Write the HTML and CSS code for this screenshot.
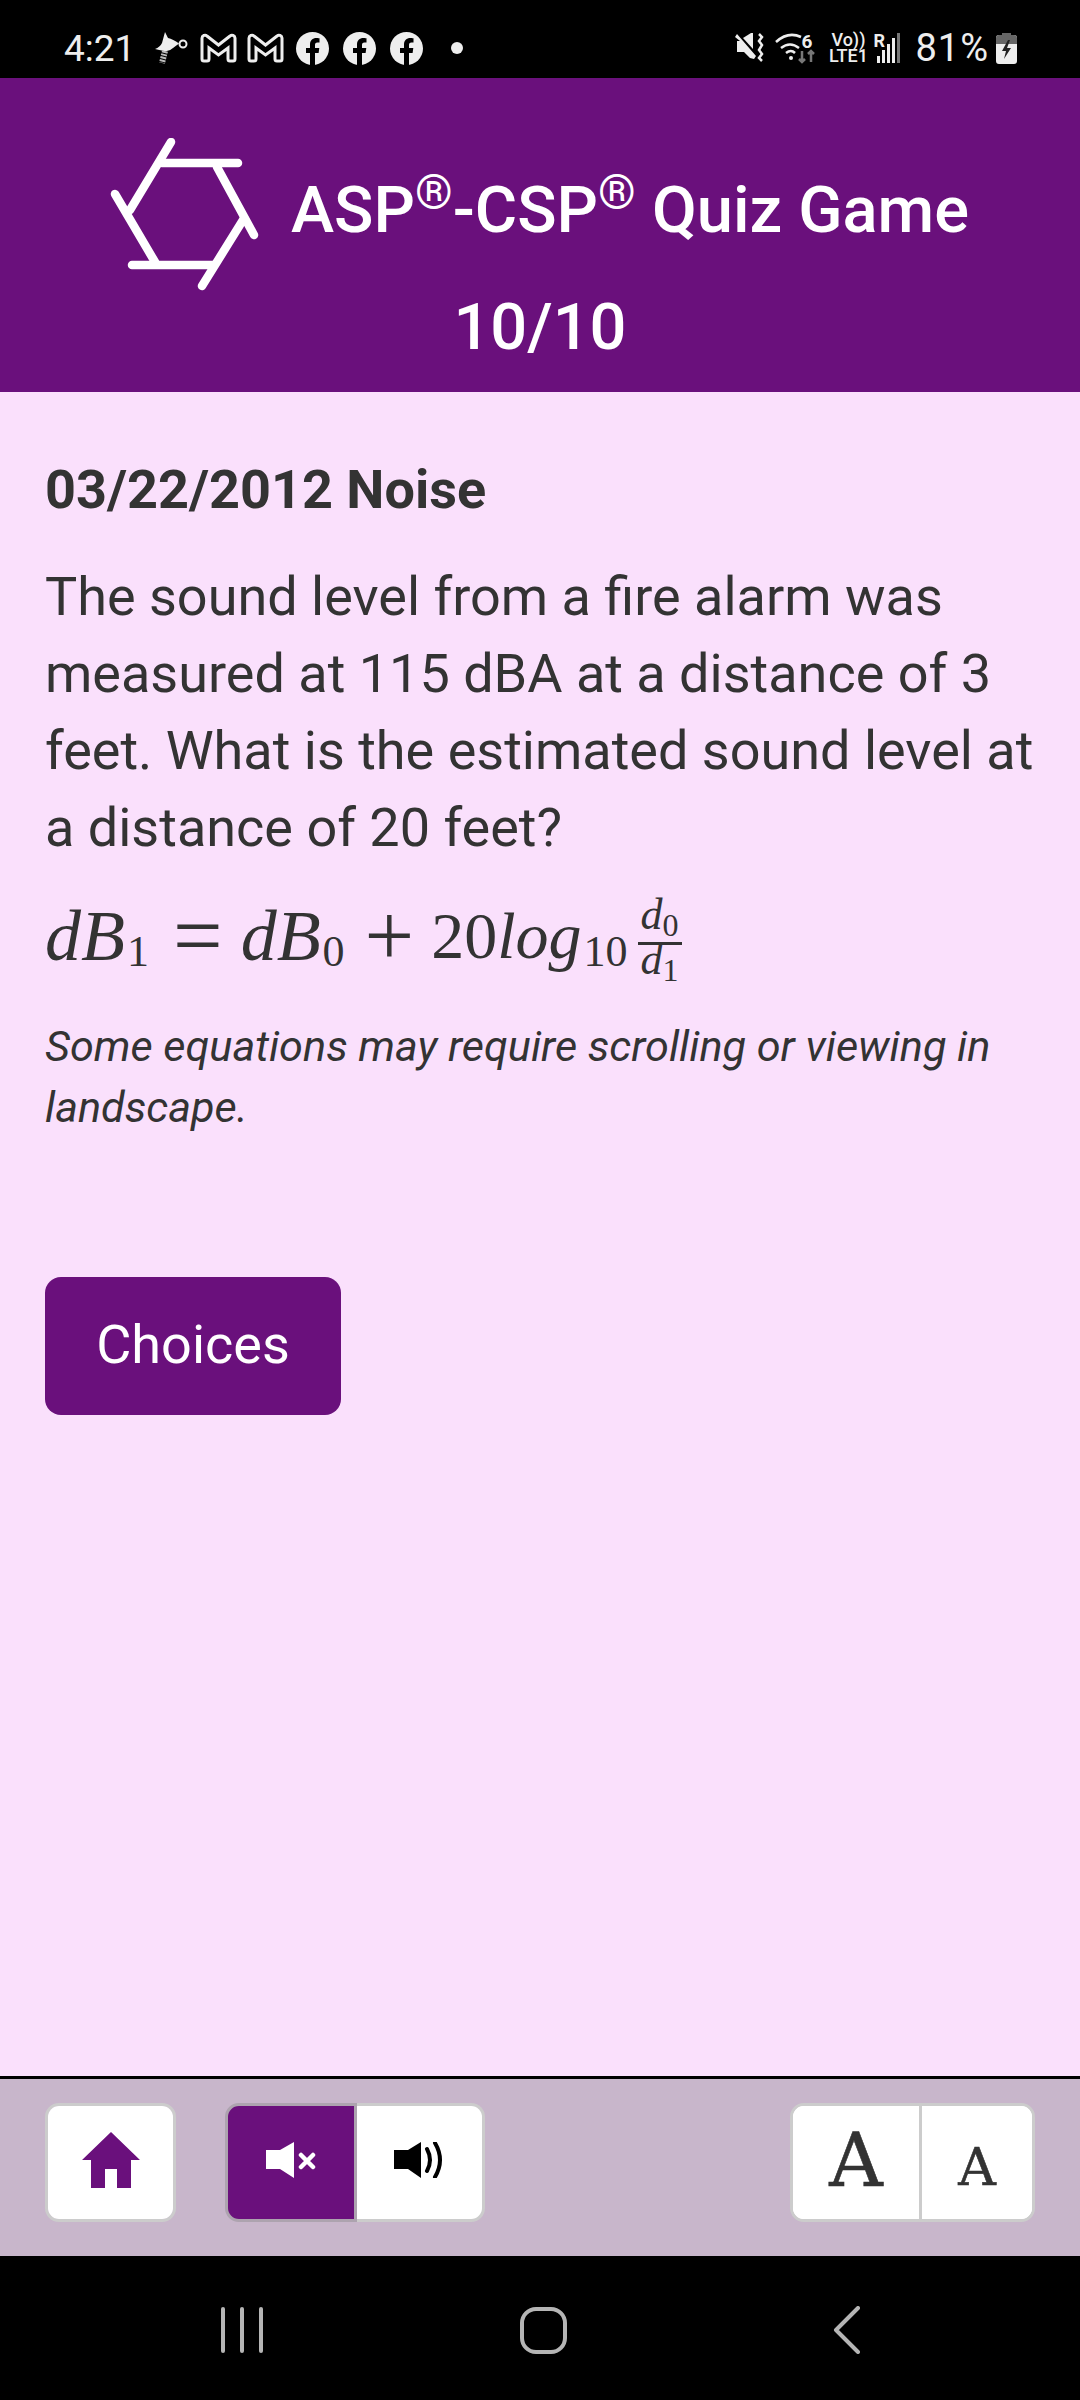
FILE: index.html
```html
<!DOCTYPE html>
<html lang="en">
  <head>
    <meta charset="UTF-8" />
    <meta name="viewport" content="width=device-width, initial-scale=1.0" />
    <title>ASP-CSP Quiz Game</title>
    <link rel="stylesheet" href="styles.css">
  </head>
  <body>
    <div class="status-bar">
      <div class="status-left">
        <span class="clock">4:21</span>
        <svg class="icon-bird" width="34" height="34" viewBox="0 0 34 34" fill="#eee">
          <path d="M10 1L13 7Q18 8 24 12.500L18 17Q14 21 9 20Q4 19 0 18Q5 16 7 12z" />
          <circle cx="28" cy="13" r="3.500" fill="none" stroke="#eee" stroke-width="2" />
          <path d="M10 20L7 32" fill="none" stroke="#bbb" stroke-width="6" stroke-dasharray="2 1" />
        </svg>
        <svg class="icon-mail" width="37" height="30" viewBox="0 0 37 30" fill="none" stroke="#eee" stroke-width="3">
          <path d="M2 5a3 3 0 0 1 5-2l11.500 9L30 3a3 3 0 0 1 5 2v21a2 2 0 0 1-2 2h-3a2 2 0 0 1-2-2V15l-9.500 7L9 15v11a2 2 0 0 1-2 2H4a2 2 0 0 1-2-2z" />
        </svg>
        <svg class="icon-mail" width="37" height="30" viewBox="0 0 37 30" fill="none" stroke="#eee" stroke-width="3">
          <path d="M2 5a3 3 0 0 1 5-2l11.500 9L30 3a3 3 0 0 1 5 2v21a2 2 0 0 1-2 2h-3a2 2 0 0 1-2-2V15l-9.500 7L9 15v11a2 2 0 0 1-2 2H4a2 2 0 0 1-2-2z" />
        </svg>
        <svg class="icon-fb" width="33" height="33" viewBox="0 0 33 33">
          <circle cx="16.500" cy="16.500" r="16.500" fill="#eee" />
          <path d="M14 33V21h-4v-5h4v-3.500C14 8.500 16.500 6 20.500 6c1.500 0 3 .3 3 .3v4.200h-2c-2 0-2.500 1.200-2.500 2.500V16h4.300l-.7 5H19v12z" fill="#000" />
        </svg>
        <svg class="icon-fb" width="33" height="33" viewBox="0 0 33 33">
          <circle cx="16.500" cy="16.500" r="16.500" fill="#eee" />
          <path d="M14 33V21h-4v-5h4v-3.500C14 8.500 16.500 6 20.500 6c1.500 0 3 .3 3 .3v4.200h-2c-2 0-2.500 1.200-2.500 2.500V16h4.300l-.7 5H19v12z" fill="#000" />
        </svg>
        <svg class="icon-fb" width="33" height="33" viewBox="0 0 33 33">
          <circle cx="16.500" cy="16.500" r="16.500" fill="#eee" />
          <path d="M14 33V21h-4v-5h4v-3.500C14 8.500 16.500 6 20.500 6c1.500 0 3 .3 3 .3v4.200h-2c-2 0-2.500 1.200-2.500 2.500V16h4.300l-.7 5H19v12z" fill="#000" />
        </svg>
        <span class="status-dot"></span>
      </div>
      <div class="status-right">
        <svg class="icon-mute" width="29" height="30" viewBox="0 0 29 30" fill="#eee">
          <path d="M0 4l2-3 19 22-2 3-4-1-6-6H2V8h3z" />
          <path d="M16 0h2v16L8 5z" />
          <path d="M24 1l3 3-3 4 3 4-3 5 3 4-3 4 3 3" fill="none" stroke="#eee" stroke-width="2.500" />
        </svg>
        <svg class="icon-wifi" width="48" height="32" viewBox="0 0 48 32" fill="none" stroke="#eee" stroke-width="2.500">
          <path d="M1 10q12-11 25-5" />
          <path d="M6 16q9-7 18 0" />
          <path d="M11 21q5-4 9 0" />
          <circle cx="16" cy="26" r="2" fill="#eee" stroke="none" />
          <path d="M27 19v11m-3-3l3 3 3-3" stroke="#777" />
          <path d="M36 30V19m-3 3l3-3 3 3" stroke="#777" />
        </svg>
        <span class="wifi-six">6</span>
        <div class="net-label">
          <span>Vo))</span>
          <span>LTE1</span>
        </div>
        <span class="roam">R</span>
        <div class="signal">
          <i class="bar-1"></i><i class="bar-2"></i><i class="bar-3"></i><i class="bar-4"></i><i class="bar-5"></i>
        </div>
        <span class="battery-text">81%</span>
        <svg class="icon-battery" width="21" height="31" viewBox="0 0 21 31">
          <path d="M6 0h9v2h3a3 3 0 0 1 3 3v23a3 3 0 0 1-3 3H3a3 3 0 0 1-3-3V5a3 3 0 0 1 3-3h3z" fill="#eee" />
          <path d="M6 0h9v2h3a3 3 0 0 1 3 3v6H0V5a3 3 0 0 1 3-3h3z" fill="#666" />
          <path d="M12 7l-6 11h4l-2 8 7-11h-4l3-8z" fill="#222" />
        </svg>
      </div>
    </div>

    <div class="header">
      <div class="header-row">
        <svg class="logo" width="152" height="154" viewBox="0 0 152 154" fill="none" stroke="#fff" stroke-width="8.500" stroke-linecap="round">
          <path d="M61 4L20 72" />
          <path d="M52 25H128" />
          <path d="M107 29L144 97" />
          <path d="M133 82L92 148" />
          <path d="M22 127H103" />
          <path d="M5 56L45 124" />
        </svg>
        <div class="title">ASP<sup>®</sup>-CSP<sup>®</sup> Quiz Game</div>
      </div>
      <div class="score">10/10</div>
    </div>

    <div class="content">
      <div class="question-title">03/22/2012 Noise</div>
      <p class="question-text">
        The sound level from a fire alarm was measured at 115 dBA at a distance of 3 feet. What is the estimated sound level at a distance of 20 feet?
      </p>
      <div class="equation">
        <i>dB</i><sub>1</sub>
        <span class="op eq">=</span>
        <i>dB</i><sub>0</sub>
        <span class="op plus">+</span>
        <span class="log">20</span><i class="log">log</i><sub>10</sub>
        <span class="fraction">
          <span class="fraction-over"><i>d</i><sub>0</sub></span>
          <span class="fraction-under"><i>d</i><sub>1</sub></span>
        </span>
      </div>
      <p class="note">Some equations may require scrolling or viewing in landscape.</p>
      <button class="choices-btn">Choices</button>
    </div>

    <div class="footer">
      <div class="btn-group">
        <button class="tool-btn home-btn">
          <svg width="58" height="56" viewBox="0 0 58 56" fill="#6a107c">
            <path d="M29 0L58 28H49V56H35V37H23V56H9V28H0z" />
          </svg>
        </button>
      </div>
      <div class="sound-group">
        <button class="tool-btn sound-btn active">
          <svg width="50" height="36" viewBox="0 0 50 36" fill="#fff">
            <path d="M0 8H14L28 0V36L14 27H0z" />
            <path d="M35 13L47 25M47 13L35 25" stroke="#fff" stroke-width="4.500" stroke-linecap="round" fill="none" />
          </svg>
        </button>
        <button class="tool-btn sound-btn">
          <svg width="51" height="36" viewBox="0 0 51 36" fill="#000">
            <path d="M0 8H14L27 0V36L14 27H0z" />
            <path d="M33 7q6 11 0 22M41 1q10 17 0 34" stroke="#000" stroke-width="4" stroke-linecap="round" fill="none" />
          </svg>
        </button>
      </div>
      <div class="btn-group font-group">
        <button class="tool-btn font-btn large">A</button>
        <button class="tool-btn font-btn small">A</button>
      </div>
    </div>

    <div class="nav-bar">
      <div class="nav-recent"><i></i><i></i><i></i></div>
      <div class="nav-home"></div>
      <svg class="nav-back" width="27" height="48" viewBox="0 0 27 48" fill="none" stroke="#b5b5b5" stroke-width="4" stroke-linecap="round" stroke-linejoin="round">
        <path d="M25 2L3 24L25 46" />
      </svg>
    </div>
  </body>
</html>
```

FILE: styles.css
```css
* {
  margin: 0;
  padding: 0;
  box-sizing: border-box;
}

body {
  width: 1080px;
  height: 2400px;
  display: flex;
  flex-direction: column;
  background: #fae0fc;
  font-family: Roboto, "Liberation Sans", sans-serif;
  color: #333;
  overflow: hidden;
}

/* phone status bar */
.status-bar {
  height: 78px;
  flex: none;
  background: #000;
  color: #eee;
  display: flex;
  align-items: center;
  justify-content: space-between;
  padding: 18px 63px 0 64px;
}

.status-left,
.status-right {
  display: flex;
  align-items: center;
  height: 60px;
}

.clock {
  font-size: 37px;
  width: 91px;
}

.icon-mail {
  margin-left: 10px;
}

.icon-bird + .icon-mail {
  margin-left: 11px;
}

.icon-fb {
  margin-left: 14px;
}

.icon-mail + .icon-fb {
  margin-left: 12px;
}

.status-dot {
  width: 12px;
  height: 12px;
  border-radius: 50%;
  background: #eee;
  margin-left: 28px;
}

.icon-wifi {
  margin-left: 11px;
}

.wifi-six {
  font-size: 19px;
  font-weight: 700;
  margin: -14px 0 0 -22px;
  width: 22px;
}

.net-label {
  display: flex;
  flex-direction: column;
  align-items: center;
  font-size: 18px;
  font-weight: 500;
  line-height: 16px;
  width: 40px;
  margin-left: 5px;
}

.roam {
  font-size: 18px;
  font-weight: 700;
  margin: -16px 0 0 5px;
  width: 10px;
}

.signal {
  display: flex;
  align-items: flex-end;
  gap: 2px;
  height: 30px;
  margin-left: -6px;
}

.signal i {
  width: 3px;
  background: #eee;
}

.signal .bar-1 { height: 7px; }
.signal .bar-2 { height: 13px; }
.signal .bar-3 { height: 19px; }
.signal .bar-4 { height: 25px; }
.signal .bar-5 { height: 30px; background: #777; }

.battery-text {
  font-size: 38px;
  margin-left: 15px;
  letter-spacing: 1px;
}

.icon-battery {
  margin-left: 7px;
}

/* purple title block */
.header {
  height: 314px;
  flex: none;
  background: #6a107c;
  color: #fff;
  padding-top: 60px;
}

.header-row {
  display: flex;
  align-items: center;
  padding-left: 110px;
  gap: 29px;
  height: 154px;
}

.title {
  font-size: 65px;
  font-weight: 500;
  white-space: nowrap;
  margin-bottom: 10px;
}

.title sup {
  font-size: 48px;
  font-weight: 400;
  line-height: 0;
}

.score {
  font-size: 65px;
  font-weight: 500;
  text-align: center;
  line-height: 70px;
}

.content {
  flex: 1;
  padding: 63px 45px 0;
}

.question-title {
  font-size: 54px;
  font-weight: 700;
  line-height: 70px;
}

.question-text {
  font-size: 54px;
  line-height: 77px;
  margin-top: 33px;
}

.equation {
  font-family: "Liberation Serif", serif;
  font-size: 72px;
  display: flex;
  align-items: center;
  height: 100px;
  margin-top: 20px;
}

.equation sub {
  font-size: 44px;
  line-height: 0;
  font-style: normal;
  position: relative;
  top: 16px;
  margin-left: 2px;
}

.equation .log {
  font-size: 66px;
}

.equation .op {
  font-size: 88px;
  line-height: 1;
}

.equation .eq {
  margin: 0 18px 0 24px;
}

.equation .plus {
  margin: 0 17px 0 20px;
}

.fraction {
  display: inline-flex;
  flex-direction: column;
  align-items: center;
  font-size: 44px;
  margin-left: 10px;
}

.fraction sub {
  font-size: 32px;
  top: -2px;
  margin-left: 0;
}

.fraction-over {
  line-height: 34px;
  padding-bottom: 10px;
}

.fraction-under {
  border-top: 3px solid #333;
  line-height: 30px;
  padding: 0 3px;
}

.note {
  font-size: 43.2px;
  font-style: italic;
  line-height: 61px;
  margin-top: 30px;
}

.choices-btn {
  display: block;
  width: 296px;
  height: 138px;
  margin-top: 139px;
  padding-bottom: 3px;
  background: #6a107c;
  color: #fff;
  border: none;
  border-radius: 16px;
  font-family: inherit;
  font-size: 54px;
}

/* bottom tool bar */
.footer {
  height: 180px;
  flex: none;
  background: #c8b6cb;
  border-top: 3px solid #000;
  display: flex;
  align-items: flex-start;
  padding: 24px 45px 0;
  gap: 49px;
}

.btn-group {
  display: flex;
  height: 119px;
  border: 3px solid #ccc;
  border-radius: 14px;
  overflow: hidden;
  background: #fff;
}

.tool-btn {
  display: flex;
  align-items: center;
  justify-content: center;
  height: 100%;
  border: none;
  background: #fff;
  padding-bottom: 6px;
}

.home-btn {
  width: 125px;
}

.sound-group {
  display: flex;
  height: 119px;
}

.sound-btn {
  width: 128px;
  border: 3px solid #ccc;
  border-left: none;
  border-radius: 0 14px 14px 0;
}

.sound-btn.active {
  width: 132px;
  background: #6a107c;
  border: 3px solid #ada3af;
  border-radius: 14px 0 0 14px;
}

.font-group {
  margin-left: auto;
}

.font-btn {
  font-family: "DejaVu Serif", serif;
  color: #333;
  -webkit-text-stroke: 0.6px #333;
}

.font-btn.large {
  width: 129px;
  font-size: 74px;
  border-right: 3px solid #ccc;
}

.font-btn.small {
  width: 110px;
  font-size: 52px;
  padding-top: 14px;
}

/* android nav buttons */
.nav-bar {
  height: 144px;
  flex: none;
  background: #000;
  display: flex;
  align-items: center;
  padding: 4px 0 0 221px;
}

.nav-recent {
  display: flex;
  gap: 15px;
  height: 46px;
}

.nav-recent i {
  width: 4px;
  background: #b5b5b5;
  border-radius: 2px;
}

.nav-home {
  width: 47px;
  height: 47px;
  border: 4px solid #b5b5b5;
  border-radius: 16px;
  margin-left: 257px;
}

.nav-back {
  margin-left: 266px;
}
```
